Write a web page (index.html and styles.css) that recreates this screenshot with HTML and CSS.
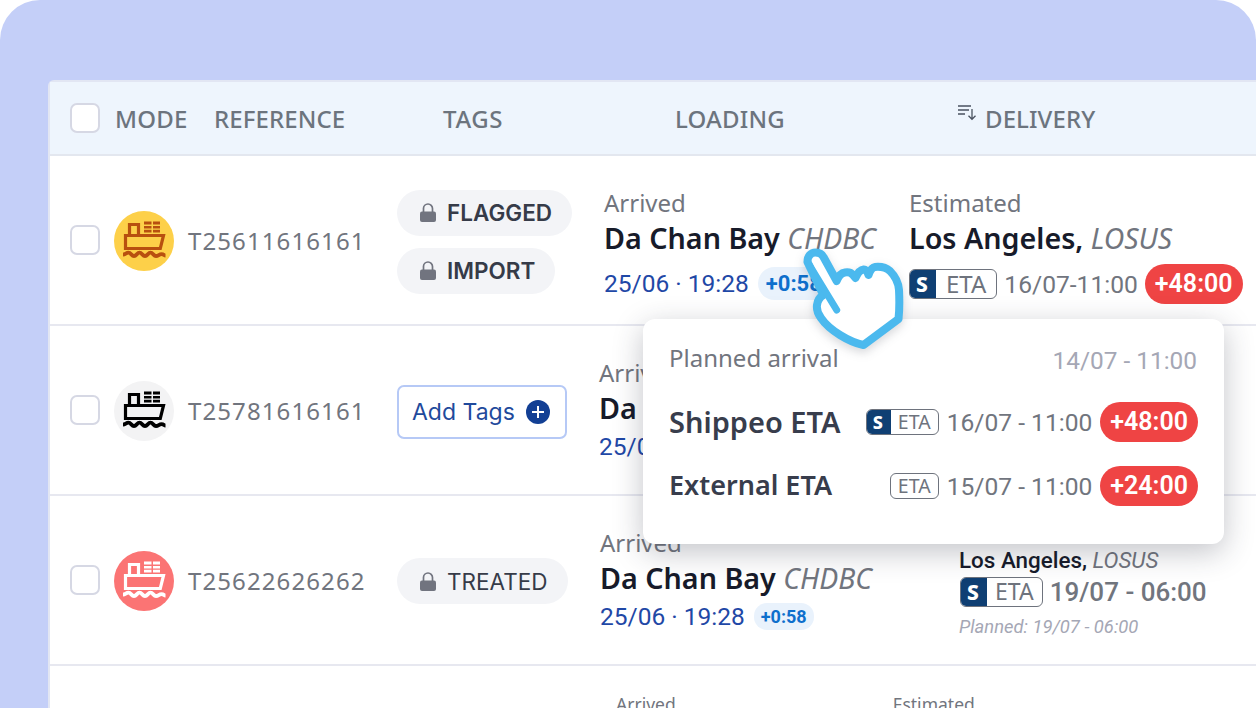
FILE: index.html
```html
<!DOCTYPE html>
<html lang="en">
  <head>
    <meta charset="UTF-8" />
    <meta name="viewport" content="width=device-width, initial-scale=1.0" />
    <title>Shipments table</title>
    <link rel="stylesheet" href="styles.css">
  </head>
  <body>
    <svg class="defs" width="0" height="0">
      <symbol id="ship" viewBox="0 0 60 60">
        <path d="M11.500 24.500h38l-3.200 13H11.500zM15.500 24V13.500h9V24" fill="none" stroke="currentColor" stroke-width="3.200" />
        <path d="M30 10.500h7.500v3H30zM39 10.500h7v3h-7zM30 15h7.500v2.600H30zM39 15h7v2.600h-7zM30 18.800h7.500v2.600H30zM39 18.800h7v2.600h-7z" fill="currentColor" />
        <path d="M9 43.500c2.500 0 3-1.800 5.500-1.800s3 3.300 5.500 3.300 3-3.300 5.500-3.300 3 3.300 5.500 3.300 3-3.300 5.500-3.300 3 3.300 5.500 3.300 3-1.800 5.500-1.800 2.500 1.500 4 1.500" fill="none" stroke="currentColor" stroke-width="3.800" />
      </symbol>
      <symbol id="lock" viewBox="0 0 16 19">
        <path d="M3.500 10V5.500a4.500 4.500 0 0 1 9 0V10" fill="none" stroke="currentColor" stroke-width="1.700" />
        <rect x="0" y="8.500" width="16" height="10.500" rx="2" fill="currentColor" />
      </symbol>
    </svg>

    <main class="stage">
      <section class="table">
        <header class="row head">
          <span class="check"></span>
          <span class="head-mode">MODE</span>
          <span class="head-ref">REFERENCE</span>
          <span class="head-tags">TAGS</span>
          <span class="head-loading">LOADING</span>
          <span class="head-delivery">
            <svg class="sort" viewBox="0 0 20 18" width="20" height="18">
              <path d="M1 3h13M1 7h11M1 11h7M15 6v10M11.500 12.800l3.500 3.500 3.500-3.500" fill="none" stroke="#4a5260" stroke-width="1.300" />
            </svg>
            DELIVERY
          </span>
        </header>

        <div class="row line">
          <span class="check"></span>
          <svg class="mode yellow"><use href="#ship" /></svg>
          <span class="ref">T25611616161</span>
          <div class="tags">
            <span class="tag"><svg class="lock"><use href="#lock" /></svg>FLAGGED</span>
            <span class="tag"><svg class="lock"><use href="#lock" /></svg>IMPORT</span>
          </div>
          <div class="place">
            <span class="status">Arrived</span>
            <span class="name">Da Chan Bay <i>CHDBC</i></span>
            <span class="when">25/06 · 19:28 <b class="diff diff-large">+0:58</b></span>
          </div>
          <div class="place">
            <span class="status">Estimated</span>
            <span class="name">Los Angeles, <i>LOSUS</i></span>
            <span class="eta-line">
              <span class="eta"><b>S</b><span>ETA</span></span>
              <span class="eta-date">16/07-11:00</span>
              <b class="late">+48:00</b>
            </span>
          </div>
        </div>

        <div class="row line">
          <span class="check"></span>
          <svg class="mode grey"><use href="#ship" /></svg>
          <span class="ref">T25781616161</span>
          <div class="tags">
            <span class="add-tags">Add Tags <b class="plus"></b></span>
          </div>
          <div class="place shift-a">
            <span class="status">Arrived</span>
            <span class="name">Da Chan Bay <i>CHDBC</i></span>
            <span class="when">25/06 · 19:28</span>
          </div>
        </div>

        <div class="row line">
          <span class="check"></span>
          <svg class="mode red"><use href="#ship" /></svg>
          <span class="ref">T25622626262</span>
          <div class="tags">
            <span class="tag tag-light"><svg class="lock"><use href="#lock" /></svg>TREATED</span>
          </div>
          <div class="place shift-b">
            <span class="status">Arrived</span>
            <span class="name">Da Chan Bay <i>CHDBC</i></span>
            <span class="when">25/06 · 19:28 <b class="diff">+0:58</b></span>
          </div>
          <div class="delivery-small">
            <span class="small-name">Los Angeles, <i>LOSUS</i></span>
            <span class="eta-line">
              <span class="eta eta-mid"><b>S</b><span>ETA</span></span>
              <span class="eta-date strong">19/07 - 06:00</span>
            </span>
            <span class="planned">Planned: 19/07 - 06:00</span>
          </div>
        </div>

        <div class="row last">
          <span class="last-arrived">Arrived</span>
          <span class="last-estimated">Estimated</span>
        </div>
      </section>

      <aside class="popup">
        <div class="pop-row pop-first">
          <span class="pop-planned">Planned arrival</span>
          <span class="pop-date">14/07 - 11:00</span>
        </div>
        <div class="pop-row">
          <strong class="pop-shippeo">Shippeo ETA</strong>
          <span class="pop-right">
            <span class="eta eta-small"><b>S</b><span>ETA</span></span>
            <span class="eta-date">16/07 - 11:00</span>
            <b class="late">+48:00</b>
          </span>
        </div>
        <div class="pop-row">
          <strong class="pop-external">External ETA</strong>
          <span class="pop-right">
            <span class="eta eta-small"><span>ETA</span></span>
            <span class="eta-date">15/07 - 11:00</span>
            <b class="late">+24:00</b>
          </span>
        </div>
      </aside>

      <svg class="hand" viewBox="0 0 110 110" width="110" height="110">
        <path d="M7.500 17C7.500 11 11 7.500 15.500 7.500C19 7.500 22 9 23.500 12L36.700 36C38.500 31 41 28 45 27.500C48.500 27 51.500 28 53 30L55.500 33C57.500 28.500 60 24.800 63.500 24.500C66 24.300 67.500 27 68.500 30C70 26 72 22.300 75 22C80 21.500 86 22.500 90 26C95 31 98.500 38 99 45C99.500 55 99.500 65 98.500 74L63.500 100C56 98.500 48 95 40 90C32 85 25 79 21 73C18 69 16.500 64 17 60C17.500 56 20 52 23.300 50Z" fill="#fff" stroke="#4bb9ee" stroke-width="8" stroke-linejoin="round" />
        <path d="M7.500 17L36.700 65" fill="none" stroke="#4bb9ee" stroke-width="7" stroke-linecap="round" />
      </svg>
    </main>
  </body>
</html>
```

FILE: styles.css
```css
* {
  box-sizing: border-box;
}

html,
body {
  margin: 0;
  height: 708px;
  overflow: hidden;
  background: #fff;
}

body {
  font-family: "Noto Sans", sans-serif;
  color: #6e737d;
}

.defs {
  position: absolute;
}

.stage {
  position: relative;
  height: 708px;
  padding: 80px 0 0 48px;
  background: #c4cff8;
  border-radius: 40px 40px 0 0;
  overflow: hidden;
}

.table {
  height: 660px;
  margin-right: -20px;
  background: #fff;
  border: 2px solid #e2e6f3;
  border-right: none;
  border-bottom: none;
  border-radius: 6px 0 0 0;
}

.row {
  display: grid;
  grid-template-columns: 44px 74px 209px 207px 305px 1fr;
  align-items: center;
  padding-left: 20px;
}

.head {
  height: 74px;
  background: #eef5fd;
  border-bottom: 2px solid #e3e7ef;
  font-size: 24px;
  font-weight: 500;
  letter-spacing: 0.2px;
  color: #6c747e;
  white-space: nowrap;
}

.head .check {
  background: #fff;
}

.head-mode {
  margin-left: 1px;
}

.head-ref {
  margin-left: 26px;
  letter-spacing: 0.1px;
}

.head-tags {
  margin-left: 46px;
  letter-spacing: 0.6px;
}

.head-loading {
  margin-left: 71px;
}

.head-delivery {
  display: flex;
  align-items: center;
  gap: 8px;
  margin-left: 48px;
  letter-spacing: 0.1px;
}

.sort {
  margin-top: -12px;
}

.line {
  height: 170px;
  border-bottom: 2px solid #e7e8f0;
}

.check {
  width: 30px;
  height: 30px;
  border: 2px solid #d6d8e4;
  border-radius: 7px;
}

.mode {
  width: 60px;
  height: 60px;
  margin-top: 2px;
  border-radius: 50%;
}

.yellow {
  background: #fdd049;
  color: #b8500f;
}

.grey {
  background: #f3f3f4;
  color: #000;
}

.red {
  background: #fb7474;
  color: #fff;
}

.ref {
  font-size: 24px;
  letter-spacing: 1.100px;
  color: #71757e;
}

.tags {
  display: flex;
  flex-direction: column;
  align-items: flex-start;
  gap: 12px;
  margin-top: 3px;
}

.tag {
  display: inline-flex;
  align-items: center;
  gap: 11px;
  height: 46px;
  padding: 0 20px 0 23px;
  background: #f3f4f7;
  border-radius: 23px;
  font-family: Inter, sans-serif;
  font-size: 22.500px;
  font-weight: 600;
  color: #363b48;
}

.tag-light {
  margin-top: -1px;
  padding-right: 21px;
  font-weight: 400;
}

.lock {
  width: 16px;
  height: 19px;
  color: #71747f;
}

.add-tags {
  display: inline-flex;
  align-items: center;
  gap: 11px;
  height: 54px;
  padding: 0 15px 0 13px;
  border: 2px solid #b6c9f6;
  border-radius: 7px;
  font-family: Inter, sans-serif;
  font-size: 23px;
  color: #1f4a9c;
}

.plus {
  position: relative;
  width: 24px;
  height: 24px;
  background: #123f94;
  border-radius: 50%;
}

.plus::before,
.plus::after {
  content: "";
  position: absolute;
  left: 6px;
  top: 11px;
  width: 12px;
  height: 2px;
  background: #fff;
}

.plus::after {
  transform: rotate(90deg);
}

.place {
  display: flex;
  flex-direction: column;
  align-items: flex-start;
  align-self: start;
  padding-top: 31px;
  white-space: nowrap;
}

.shift-a {
  margin-left: -5px;
}

.shift-b {
  margin-left: -4px;
}

.shift-a .when,
.shift-b .when {
  margin-top: -2px;
}

.status {
  font-size: 24px;
  line-height: 32px;
  color: #71757e;
}

.name {
  font-size: 28.700px;
  line-height: 38px;
  font-weight: 600;
  color: #171b2a;
}

.name i {
  font-size: 28.400px;
  font-weight: 400;
  color: #71757e;
}

.when {
  display: flex;
  align-items: center;
  gap: 9px;
  height: 42px;
  margin-top: 5px;
  font-family: Roboto, sans-serif;
  font-size: 24.500px;
  color: #1f48a6;
}

.diff {
  padding: 3px 7px;
  background: #e9f2fc;
  border-radius: 13px;
  font-size: 18px;
  font-weight: 700;
  color: #0e6fcc;
}

.diff-large {
  font-size: 22px;
  padding: 4px 8px;
  border-radius: 18px;
}

.eta-line {
  display: flex;
  align-items: center;
  gap: 7px;
  margin-top: 7px;
}

.eta {
  display: inline-flex;
  align-items: stretch;
  height: 30px;
  border: 1.500px solid #6e737d;
  border-radius: 6px;
  overflow: hidden;
  font-size: 24px;
  line-height: 27px;
  color: #6e737d;
}

.eta b {
  display: flex;
  align-items: center;
  justify-content: center;
  width: 28px;
  margin: -2px 0 -2px -2px;
  background: #0f3f73;
  font-size: 21px;
  font-weight: 800;
  color: #fff;
}

.eta span {
  padding: 0 10px;
}

.eta-date {
  font-family: Roboto, sans-serif;
  font-size: 24.600px;
  color: #71757e;
}

.strong {
  font-weight: 500;
  font-size: 26px;
}

.late {
  height: 40px;
  padding: 0 10px;
  background: #ef4444;
  border-radius: 20px;
  font-family: Roboto, sans-serif;
  font-size: 25px;
  font-weight: 600;
  line-height: 40px;
  color: #fff;
}

.delivery-small {
  display: flex;
  flex-direction: column;
  align-items: flex-start;
  align-self: start;
  margin-left: 50px;
  padding-top: 50px;
  white-space: nowrap;
}

.small-name {
  font-family: Roboto, sans-serif;
  font-size: 22.400px;
  font-weight: 500;
  line-height: 28px;
  color: #171b2a;
}

.small-name i {
  font-weight: 400;
  color: #71757e;
}

.delivery-small .eta-line {
  gap: 7px;
  margin-top: 3px;
}

.eta-mid {
  margin-left: 1px;
  font-size: 23px;
}

.eta-mid b {
  width: 28px;
}

.eta-mid span {
  padding: 0 8px;
}

.planned {
  margin-top: 9px;
  font-family: Roboto, sans-serif;
  font-size: 18.400px;
  font-style: italic;
  color: #a5a7b5;
}

.last {
  display: flex;
  padding: 0;
  font-size: 17.500px;
  color: #71757e;
}

.last-arrived {
  margin: 26px 0 0 566px;
}

.last-estimated {
  margin: 26px 0 0 217px;
}

.popup {
  position: absolute;
  left: 643px;
  top: 319px;
  width: 581px;
  height: 225px;
  padding: 24px 26px 0;
  background: #fff;
  border-radius: 12px;
  box-shadow: 0 8px 30px rgba(40, 44, 60, 0.28);
}

.pop-row {
  display: flex;
  align-items: center;
  justify-content: space-between;
  height: 64px;
}

.pop-first {
  height: 36px;
  margin-bottom: 11px;
}

.pop-row strong {
  font-size: 27px;
  font-weight: 600;
  color: #383d4c;
}

.pop-row .pop-shippeo {
  margin-top: -2px;
  font-size: 29px;
}

.pop-external {
  margin-top: -4px;
}

.pop-planned {
  margin-top: -8px;
  font-size: 24px;
  color: #71757e;
}

.pop-date {
  margin: -1px 1px 0 0;
  font-family: Roboto, sans-serif;
  font-size: 24.400px;
  color: #a5a7b5;
}

.pop-right {
  display: flex;
  align-items: center;
  gap: 8px;
}

.eta-small {
  height: 26px;
  font-size: 19.500px;
  line-height: 23px;
}

.eta-small b {
  width: 26px;
  font-size: 18px;
}

.eta-small span {
  padding: 0 7px;
}

.hand {
  position: absolute;
  left: 800px;
  top: 245px;
  filter: drop-shadow(0 4px 5px rgba(40, 44, 60, 0.18));
}
```
